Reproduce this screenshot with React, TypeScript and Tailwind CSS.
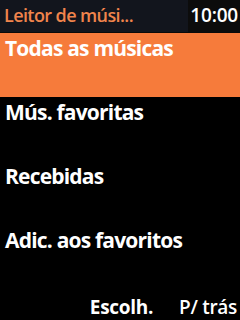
import React from "react";

const items = ["Todas as músicas", "Mús. favoritas", "Recebidas", "Adic. aos favoritos"];

export default function App() {
  return (
    <div
      className="w-[240px] h-[320px] bg-black flex flex-col overflow-hidden"
      style={{ fontFamily: '"Open Sans", "DejaVu Sans", sans-serif' }}
    >
      <div className="h-[33px] flex bg-[#12151d] border-b border-[#0a0a0a]">
        <div className="flex-1 pl-[4px] pt-[2px] text-[#f0844c] text-[18px] font-semibold leading-[26px] tracking-[-0.6px]">
          Leitor de músi...
        </div>
        <div className="w-[52px] bg-[#0c0c0c] flex justify-end pr-[2px] pt-[2px] text-white text-[19px] font-semibold leading-[26px] tracking-[-0.2px]">
          10:00
        </div>
      </div>
      <div className="flex flex-col">
        {items.map((t, i) => (
          <div
            key={t}
            className={`h-[64px] pl-[5px] pt-[1px] text-white text-[21px] font-bold leading-[28px] tracking-[-0.8px] ${
              i === 0 ? "bg-[#f67b3b]" : ""
            }`}
          >
            {t}
          </div>
        ))}
      </div>
      <div className="flex-1 flex items-end justify-end pb-[1px] pr-[3px] text-white text-[19px] font-bold leading-[24px] tracking-[-0.3px]">
        <span className="mr-[26px]">Escolh.</span>
        <span className="font-semibold">P/ trás</span>
      </div>
    </div>
  );
}
